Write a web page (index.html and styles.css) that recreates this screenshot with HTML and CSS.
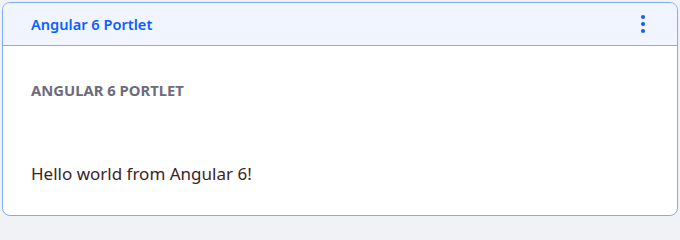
FILE: index.html
```html
<!DOCTYPE html>
<html>
<head>
<meta charset="utf-8">
<link rel="stylesheet" href="styles.css">
</head>
<body>
<div class="portlet">
  <div class="portlet-header">
    <span class="portlet-title">Angular 6 Portlet</span>
    <button class="options" aria-label="Options">
      <svg width="4" height="18" viewBox="0 0 4 18"><circle cx="2" cy="2" r="2"/><circle cx="2" cy="9" r="2"/><circle cx="2" cy="16" r="2"/></svg>
    </button>
  </div>
  <div class="portlet-body">
    <h2 class="portlet-subtitle">ANGULAR 6 PORTLET</h2>
    <p class="greeting">Hello world from Angular 6!</p>
  </div>
</div>
</body>
</html>
```
FILE: styles.css
```css
html, body {
  margin: 0;
  padding: 0;
  background: #f1f2f5;
}
body {
  padding: 2px;
  font-family: "Noto Sans", "Open Sans", sans-serif;
}
.portlet {
  box-sizing: border-box;
  height: 214px;
  background: #fff;
  border: 1px solid #80acff;
  border-radius: 8px;
  overflow: hidden;
  display: flex;
  flex-direction: column;
}
.portlet-header {
  height: 42px;
  background: #f0f5ff;
  border-bottom: 1px solid #80acff;
  display: flex;
  align-items: center;
  justify-content: space-between;
  padding: 0 32px 0 28px;
}
.portlet-title {
  color: #0b5fff;
  font-size: 14.6px;
  font-weight: 600;
}
.options {
  border: 0;
  background: none;
  padding: 0;
  display: flex;
  fill: #0b5fff;
}
.portlet-body {
  padding: 0 28px;
}
.portlet-subtitle {
  margin: 34px 0 0;
  color: #6b6c7e;
  font-size: 14.8px;
  font-weight: 700;
  line-height: 20px;
}
.greeting {
  margin: 62px 0 0;
  color: #3a2426;
  font-size: 17px;
  line-height: 24px;
}
```
